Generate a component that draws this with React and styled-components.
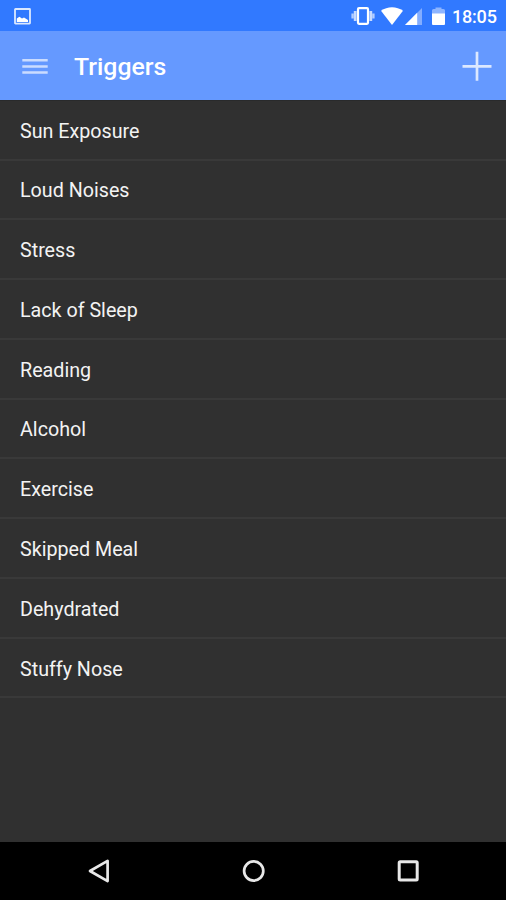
import React from "react";
import styled, { createGlobalStyle } from "styled-components";

const GlobalStyle = createGlobalStyle`
  body { margin: 0; background: #303030; font-family: Roboto, sans-serif; }
`;

const Screen = styled.div`
  display: flex;
  flex-direction: column;
  width: 506px;
  height: 900px;
  overflow: hidden;
  background: #303030;
`;

const StatusBar = styled.header`
  display: flex;
  align-items: center;
  justify-content: space-between;
  flex: none;
  box-sizing: border-box;
  height: 31px;
  padding: 1px 10px 0 14px;
  background: #3179ff;
  color: #fff;
`;

const StatusGroup = styled.div`
  display: flex;
  align-items: center;
`;

const Glyph = styled.svg`
  display: block;
  flex: none;
  margin-left: ${({ $gap = 0 }) => $gap}px;
`;

const Clock = styled.time`
  width: 44px;
  margin: 1px 0 0 7.5px;
  font-size: 18px;
  line-height: 22px;
  font-weight: 500;
  letter-spacing: -0.2px;
  white-space: nowrap;
`;

const Toolbar = styled.div`
  display: flex;
  align-items: center;
  flex: none;
  box-sizing: border-box;
  height: 69px;
  padding: 0 14px 0 22px;
  background: #6599ff;
  color: #fff;
`;

const IconButton = styled.button`
  display: flex;
  padding: 0;
  border: 0;
  background: none;
  color: inherit;
`;

const Title = styled.h1`
  flex: 1;
  margin: 2px 0 0 26px;
  font-size: 24.8px;
  line-height: 30px;
  font-weight: 500;
`;

const List = styled.ul`
  flex: 1;
  margin: 0;
  padding: 0;
  list-style: none;
  border-top: 1px solid #292a2b;
`;

const Row = styled.li`
  display: flex;
  align-items: center;
  box-sizing: border-box;
  height: 59.78px;
  padding: 4px 20px 0;
  border-bottom: 2px solid #393939;
  color: #f3f3f3;
  font-size: 19.7px;
  line-height: 24px;

  &:first-child {
    height: 59.5px;
  }
`;

const NavBar = styled.nav`
  display: flex;
  align-items: center;
  justify-content: space-between;
  flex: none;
  box-sizing: border-box;
  height: 58px;
  padding: 0 86px 0 87px;
  background: #000;
  color: #e8e8e8;
`;

const triggers = [
  "Sun Exposure",
  "Loud Noises",
  "Stress",
  "Lack of Sleep",
  "Reading",
  "Alcohol",
  "Exercise",
  "Skipped Meal",
  "Dehydrated",
  "Stuffy Nose",
];

export default function App() {
  return (
    <Screen>
      <GlobalStyle />
      <StatusBar>
        <Glyph width="17" height="17" viewBox="0 0 17 17">
          <rect x="1" y="1" width="15" height="14.6" rx="0.5" fill="none" stroke="#dbe8ff" strokeWidth="1.8" />
          <path d="M2.8 14V10.6L5.4 8.8L8 10.6L10 9.6L14 12V14Z" fill="#fff" />
        </Glyph>
        <StatusGroup>
          <Glyph width="24" height="18" viewBox="0 0 24 18">
            <rect x="7" y="1.2" width="10" height="15.6" rx="1" fill="none" stroke="#fff" strokeWidth="2.2" />
            <path d="M4.2 4V14M19.8 4V14" stroke="#c6daff" strokeWidth="2.8" />
            <path d="M1.6 6.5V11.5M22.4 6.5V11.5" stroke="#b4ceff" strokeWidth="2.4" />
          </Glyph>
          <Glyph $gap={6} width="22" height="18" viewBox="0 0 22 18">
            <path d="M0 3.8C6.2-1 15.8-1 22 3.8L11 18Z" fill="#fff" />
          </Glyph>
          <Glyph $gap={2} width="17" height="17" viewBox="0 0 17 17">
            <path d="M0 17L17 0V17Z" fill="#83adff" />
            <path d="M0 17L12.2 4.8V17Z" fill="#fff" />
          </Glyph>
          <Glyph $gap={10} width="13" height="18" viewBox="0 0 13 18">
            <path d="M3.5 0.6H9.5V2H11.5Q13 2 13 3.5V7H0V3.5Q0 2 1.5 2H3.5Z" fill="#8eb5ff" />
            <path d="M0 6.5H13V17Q13 18 12 18H1Q0 18 0 17Z" fill="#fff" />
          </Glyph>
          <Clock>18:05</Clock>
        </StatusGroup>
      </StatusBar>
      <Toolbar>
        <IconButton aria-label="Menu">
          <Glyph width="26" height="16" viewBox="0 0 26 16">
            <path d="M0.3 2.2H25.7M0.3 8.4H25.7M0.3 14.5H25.7" stroke="#cbdcff" strokeWidth="2.5" />
          </Glyph>
        </IconButton>
        <Title>Triggers</Title>
        <IconButton aria-label="Add trigger">
          <Glyph width="30" height="30" viewBox="0 0 30 30">
            <path d="M0.5 15.3H29.5M15 0.8V29.8" stroke="#dce8ff" strokeWidth="2.7" />
          </Glyph>
        </IconButton>
      </Toolbar>
      <List>
        {triggers.map((name) => (
          <Row key={name}>{name}</Row>
        ))}
      </List>
      <NavBar>
        <IconButton aria-label="Back">
          <Glyph width="24" height="24" viewBox="0 0 24 24">
            <path d="M3 12L20.6 1.9V22.1Z" fill="none" stroke="currentColor" strokeWidth="2.7" strokeLinejoin="round" />
          </Glyph>
        </IconButton>
        <IconButton aria-label="Home">
          <Glyph width="24" height="24" viewBox="0 0 24 24">
            <circle cx="11.7" cy="12" r="9.6" fill="none" stroke="currentColor" strokeWidth="2.7" />
          </Glyph>
        </IconButton>
        <IconButton aria-label="Overview">
          <Glyph width="24" height="24" viewBox="0 0 24 24">
            <rect x="3.2" y="2.8" width="18" height="18.2" rx="1" fill="none" stroke="currentColor" strokeWidth="3" />
          </Glyph>
        </IconButton>
      </NavBar>
    </Screen>
  );
}
